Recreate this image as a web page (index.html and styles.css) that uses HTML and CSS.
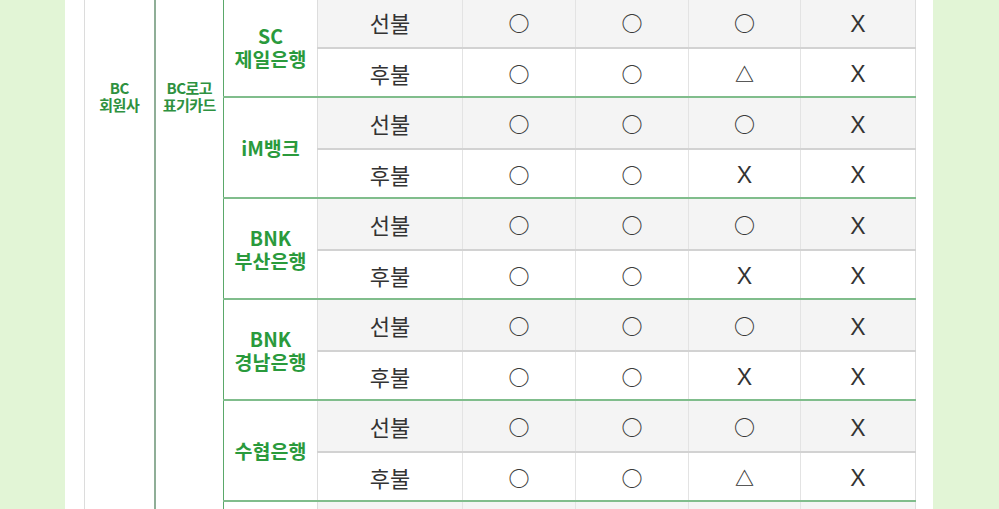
FILE: index.html
```html
<!DOCTYPE html>
<html lang="ko">
<head>
<meta charset="utf-8">
<title>BC 카드 결제 가능 여부</title>
<link rel="stylesheet" href="styles.css">
</head>
<body>
<div class="panel">
  <table class="cards">
    <colgroup>
      <col class="c1"><col class="c2"><col class="c3"><col class="c4">
      <col class="c5"><col class="c6"><col class="c7"><col class="c8">
    </colgroup>
    <tr class="pre">
      <td class="grp" rowspan="12"><div class="grp-label">BC<br>회원사</div></td>
      <td class="grp2" rowspan="12"><div class="grp-label">BC로고<br>표기카드</div></td>
      <td class="bank" rowspan="2">SC<br>제일은행</td>
      <td class="kind">선불</td><td class="o">○</td><td class="o">○</td><td class="o">○</td><td class="x last"><span class="mk">X</span></td>
    </tr>
    <tr class="post">
      <td class="kind">후불</td><td class="o">○</td><td class="o">○</td><td class="tri"><span class="mk">△</span></td><td class="x last"><span class="mk">X</span></td>
    </tr>
    <tr class="pre">
      <td class="bank" rowspan="2">iM뱅크</td>
      <td class="kind">선불</td><td class="o">○</td><td class="o">○</td><td class="o">○</td><td class="x last"><span class="mk">X</span></td>
    </tr>
    <tr class="post">
      <td class="kind">후불</td><td class="o">○</td><td class="o">○</td><td class="x"><span class="mk">X</span></td><td class="x last"><span class="mk">X</span></td>
    </tr>
    <tr class="pre">
      <td class="bank" rowspan="2">BNK<br>부산은행</td>
      <td class="kind">선불</td><td class="o">○</td><td class="o">○</td><td class="o">○</td><td class="x last"><span class="mk">X</span></td>
    </tr>
    <tr class="post">
      <td class="kind">후불</td><td class="o">○</td><td class="o">○</td><td class="x"><span class="mk">X</span></td><td class="x last"><span class="mk">X</span></td>
    </tr>
    <tr class="pre">
      <td class="bank" rowspan="2">BNK<br>경남은행</td>
      <td class="kind">선불</td><td class="o">○</td><td class="o">○</td><td class="o">○</td><td class="x last"><span class="mk">X</span></td>
    </tr>
    <tr class="post">
      <td class="kind">후불</td><td class="o">○</td><td class="o">○</td><td class="x"><span class="mk">X</span></td><td class="x last"><span class="mk">X</span></td>
    </tr>
    <tr class="pre">
      <td class="bank" rowspan="2">수협은행</td>
      <td class="kind">선불</td><td class="o">○</td><td class="o">○</td><td class="o">○</td><td class="x last"><span class="mk">X</span></td>
    </tr>
    <tr class="post">
      <td class="kind">후불</td><td class="o">○</td><td class="o">○</td><td class="tri"><span class="mk">△</span></td><td class="x last"><span class="mk">X</span></td>
    </tr>
    <tr class="pre">
      <td class="bank" rowspan="2"></td>
      <td class="kind"></td><td></td><td></td><td></td><td class="last"></td>
    </tr>
    <tr class="post">
      <td class="kind"></td><td></td><td></td><td></td><td class="last"></td>
    </tr>
  </table>
</div>
</body>
</html>
```

FILE: styles.css
```css
html, body {
  margin: 0;
  padding: 0;
}
body {
  background: #e2f5d6;
  height: 509px;
  overflow: hidden;
  font-family: "Noto Sans CJK KR", "Noto Sans", sans-serif;
}
.panel {
  margin-left: 65px;
  width: 830px;
  padding: 0 19px;
  height: 509px;
  background: #ffffff;
  overflow: hidden;
}
.cards {
  border-collapse: collapse;
  table-layout: fixed;
  width: 831px;
  margin-top: -3px;
}
.c1 { width: 70px; }
.c2 { width: 69px; }
.c3 { width: 94px; }
.c4 { width: 145px; }
.c5 { width: 113px; }
.c6 { width: 113px; }
.c7 { width: 112px; }
.c8 { width: 115px; }

.cards td {
  padding: 0;
  text-align: center;
  vertical-align: middle;
  color: #333333;
  font-size: 22px;
  line-height: 26px;
  border-left: 1px solid #e3e3e3;
  border-right: 1px solid #e3e3e3;
}
.cards tr.pre td {
  height: 50px;
  background: #f4f4f4;
  border-bottom: 2px solid #d2d2d2;
}
.cards tr.post td {
  height: 47px;
  background: #ffffff;
  border-bottom: 2px solid #80bd8c;
}
.cards td.last {
  border-right: 1px solid #dddddd;
}
.cards td.o {
  font-size: 21px;
  font-weight: 700;
  color: #3a3a3a;
}
.cards td.x {
  font-family: "Liberation Sans", "Noto Sans", sans-serif;
  font-size: 23px;
  color: #333333;
}
.cards td.tri {
  font-size: 19px;
  font-weight: 700;
  color: #333333;
}
.mk {
  display: inline-block;
  vertical-align: -3px;
}

.cards tr td.grp,
.cards tr td.grp2 {
  background: #ffffff;
  vertical-align: top;
  border-bottom: none;
}
.cards td.grp {
  border-left: 1px solid #dcdcdc;
  border-right: 2px solid #8fae97;
}
.cards td.grp2 {
  border-right: 1px solid #5aa86a;
}
.grp-label {
  padding-top: 82px;
  font-size: 15px;
  line-height: 17px;
  font-weight: 700;
  color: #2e9140;
  letter-spacing: -0.5px;
}
.cards tr td.bank {
  background: #ffffff;
  border-bottom: 2px solid #80bd8c;
  border-right: 1px solid #dddddd;
  font-size: 19.5px;
  line-height: 23px;
  font-weight: 700;
  color: #2a9a3c;
}
.cards td.kind {
  color: #333333;
}
```
